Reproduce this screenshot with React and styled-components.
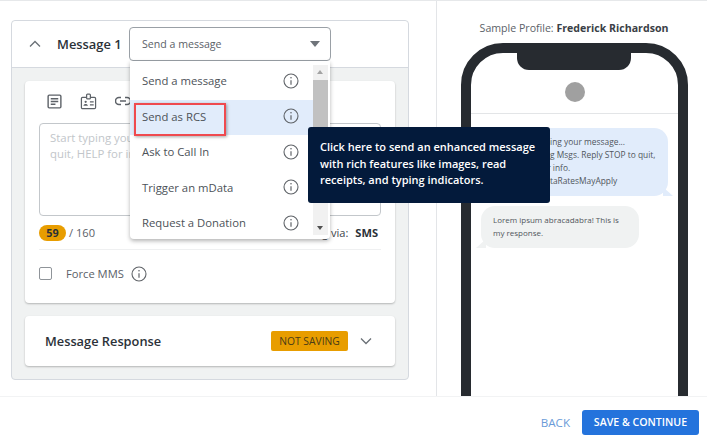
import React from 'react';
import styled, { createGlobalStyle } from 'styled-components';

const Global = createGlobalStyle`
  html, body { margin: 0; padding: 0; background: #fff; width: 707px; height: 439px; overflow: hidden; }
  body { font-family: "Open Sans", "Liberation Sans", sans-serif; color: #2b3138; }
  * { box-sizing: border-box; }
`;
const Page = styled.div`width:707px;height:439px;display:flex;flex-direction:column;border-top:1px solid #e6e8ea;overflow:hidden;`;
const Main = styled.div`display:flex;height:396px;border-bottom:1px solid #f2f3f4;`;
const LeftPane = styled.div`width:437px;flex:none;padding:19px 27px 0 11px;border-right:1px solid #e3e5e8;`;
const Card = styled.section`width:398px;height:360px;border:1px solid #d5d9df;border-radius:4px;background:#f0f2f2;display:flex;flex-direction:column;`;
const CardHeader = styled.header`height:47px;flex:none;background:#fff;border-bottom:1px solid #d5d9df;border-radius:4px 4px 0 0;display:flex;align-items:center;padding-left:16px;`;
const HeaderTitle = styled.h2`width:72px;flex:none;margin:0 0 0 15px;font-size:12.9px;line-height:20px;font-weight:600;color:#2b3138;white-space:nowrap;`;
const SelectWrap = styled.div`position:relative;width:202px;`;
const SelectBox = styled.div`height:34px;border:1px solid #9aa0a6;border-radius:4px;background:#fff;display:flex;align-items:center;justify-content:space-between;padding:0 10px 0 12px;font-size:10.6px;color:#5b6168;`;
const Caret = styled.span`width:0;height:0;border-left:5.5px solid transparent;border-right:5.5px solid transparent;border-top:6px solid #6f747a;`;
const Menu = styled.div`position:absolute;left:1px;top:34px;width:200px;height:178px;background:#fff;border-radius:0 0 4px 4px;box-shadow:0 2px 4px rgba(0,0,0,.3);padding-top:3px;z-index:3;`;
const MenuRow = styled.div`width:183px;height:35.5px;display:flex;align-items:center;justify-content:space-between;padding:0 14px 2px 12px;font-size:11.3px;color:#4c5258;background:${p => p.$active ? '#e1ecfb' : 'transparent'};white-space:nowrap;`;
const ScrollTrack = styled.div`position:absolute;left:183px;top:4px;width:15px;height:170px;background:#f1f1f1;`;
const ScrollThumb = styled.div`position:absolute;left:0;top:15px;width:15px;height:80px;background:#c1c1c1;`;
const ScrollArrow = styled.span`position:absolute;left:4px;${p => p.$up ? 'top:5px;border-bottom:4px solid #a3a3a3;' : 'bottom:5px;border-top:4px solid #505050;'}width:0;height:0;border-left:3.5px solid transparent;border-right:3.5px solid transparent;`;
const Highlight = styled.div`position:absolute;left:4px;top:42px;width:92px;height:33px;border:2px solid #ef4a4f;box-shadow:1px 1px 3px rgba(0,0,0,.35);`;
const Tooltip = styled.div`position:absolute;left:179px;top:100px;width:242px;height:76px;padding:12px 12px;background:#031a3b;border-radius:3px;color:#fff;font-size:11px;font-weight:600;line-height:16.7px;z-index:4;`;
const Body = styled.div`flex:1;padding:13px 13px 0;display:flex;flex-direction:column;gap:13px;`;
const EditorCard = styled.div`height:222px;background:#fff;border-radius:4px;box-shadow:0 1px 2px rgba(0,0,0,.25);padding:10px 14px 0;`;
const Toolbar = styled.div`height:20px;display:flex;align-items:center;gap:18px;padding-left:8px;color:#5d6268;margin-bottom:12px;`;
const Editor = styled.div`height:93px;border:1px solid #c3c7cb;border-radius:4px;padding:6px 10px;font-size:11.4px;line-height:16px;color:#c2c6ca;`;
const CountRow = styled.div`height:34px;display:flex;align-items:center;justify-content:space-between;border-bottom:1px solid #eff0f1;padding-right:3px;font-size:11.1px;color:#5b6168;`;
const CountLeft = styled.div`display:flex;align-items:center;gap:3px;`;
const Badge = styled.span`width:27px;height:16px;border-radius:8px;background:#e89d00;display:flex;align-items:center;justify-content:center;font-size:10.8px;font-weight:700;color:#2b3138;`;
const Via = styled.div`display:flex;gap:7px;color:#40464c;`;
const ViaValue = styled.strong`font-weight:700;color:#2b3138;`;
const ForceRow = styled.div`display:flex;align-items:center;height:47px;font-size:11.2px;color:#5b6168;`;
const Check = styled.span`width:13px;height:13px;margin-right:14px;border:1px solid #8f9499;border-radius:2px;`;
const ForceLabel = styled.span`margin-right:7px;`;
const ResponseCard = styled.div`height:50px;background:#fff;border-radius:4px;box-shadow:0 1px 2px rgba(0,0,0,.25);display:flex;align-items:center;padding:0 22px 0 20px;`;
const ResponseTitle = styled.div`flex:1;font-size:12.8px;font-weight:600;color:#2b3138;`;
const NotSaving = styled.span`width:77px;height:20px;margin-right:11px;background:#e89d00;border-radius:2px;display:flex;align-items:center;justify-content:center;font-size:10.3px;color:#4a3c17;`;
const RightPane = styled.div`flex:1;display:flex;flex-direction:column;align-items:center;padding-top:20px;overflow:hidden;`;
const Profile = styled.div`font-size:10.6px;line-height:15px;color:#5b6168;margin-bottom:7px;margin-left:4px;white-space:nowrap;`;
const ProfileName = styled.strong`font-weight:700;color:#3a4046;`;
const Phone = styled.div`position:relative;flex:none;width:227px;height:420px;margin-left:5px;border:10px solid #272b30;border-radius:42px;background:#fff;`;
const Notch = styled.div`position:absolute;left:46px;top:0;width:114px;height:17px;background:#272b30;border-radius:0 0 12px 12px;`;
const PhoneHead = styled.div`height:61px;border-bottom:1px solid #e3e5e7;display:flex;justify-content:center;padding-top:29px;`;
const Avatar = styled.div`width:20px;height:20px;border-radius:50%;background:#a0a0a0;`;
const Thread = styled.div`padding:14px 10px 0 10px;display:flex;flex-direction:column;gap:10px;line-height:13px;color:#50565c;`;
const Bubble = styled.div`position:relative;border-radius:14px;padding:7px 12px 9px;font-size:${p => p.$out ? '8.4px' : '8px'};width:${p => p.$out ? '163px' : '158px'};background:${p => p.$out ? '#e1ecfb' : '#f0f2f2'};align-self:${p => p.$out ? 'flex-end' : 'flex-start'};white-space:nowrap;
  &::after{content:"";position:absolute;bottom:0;${p => p.$out ? 'right:-5px;border-bottom:9px solid #e1ecfb;border-right:10px solid transparent;' : 'left:-5px;border-bottom:9px solid #f0f2f2;border-left:10px solid transparent;'}width:0;height:0;}`;
const Footer = styled.footer`flex:1;display:flex;align-items:center;justify-content:flex-end;padding:8px 8px 0 0;gap:12px;`;
const Back = styled.span`font-size:11.6px;color:#6a9bd8;`;
const Save = styled.button`width:117px;height:25px;border:0;border-radius:3px;background:#2473dc;color:#fff;font-family:inherit;font-size:10.6px;font-weight:600;padding:0;`;

const Info = ({ size = 16 }) => (
  <svg width={size} height={size} viewBox="0 0 16 16" fill="none" stroke="#606469" strokeWidth="1.1" style={{ flex: 'none' }}>
    <circle cx="8" cy="8" r="7" />
    <path d="M8 7.2V11.8" strokeWidth="1.2" />
    <circle cx="8" cy="4.8" r=".8" fill="#606469" stroke="none" />
  </svg>
);
const DocIcon = () => (
  <svg width="15" height="15" viewBox="0 0 16 16" fill="none" stroke="currentColor" strokeWidth="1.5">
    <rect x="1.2" y="1.2" width="13.6" height="13.6" rx="1.2" />
    <path d="M4 5h8M4 8h8M4 11h5" />
  </svg>
);
const BadgeIcon = () => (
  <svg width="17" height="17" viewBox="0 0 18 18" fill="none" stroke="currentColor" strokeWidth="1.3">
    <rect x="1.5" y="4.7" width="15" height="11.8" rx="1.2" />
    <rect x="7" y="1.2" width="4" height="5" rx="1" fill="#fff" />
    <circle cx="6" cy="9.3" r="1.2" fill="currentColor" stroke="none" />
    <path d="M3.6 13.4c.4-2.4 4.4-2.4 4.8 0z" fill="currentColor" stroke="none" />
    <path d="M10.5 9.5h4M10.5 12.5h4" />
  </svg>
);
const LinkIcon = () => (
  <svg width="16" height="16" viewBox="0 0 16 16" fill="none" stroke="currentColor" strokeWidth="1.5">
    <path d="M6 4.5H4a3.5 3.5 0 0 0 0 7h2M10 4.5h2a3.5 3.5 0 0 1 0 7h-2M5 8h6" />
  </svg>
);
const Chevron = ({ up, size = 14 }) => (
  <svg width={size} height={size} viewBox="0 0 14 14" fill="none" stroke="#6a7076" strokeWidth="1.3" style={{ flex: 'none' }}>
    <path d={up ? 'M2 9.5 7 4.5l5 5' : 'M2 4.5l5 5 5-5'} />
  </svg>
);

const options = ['Send a message', 'Send as RCS', 'Ask to Call In', 'Trigger an mData', 'Request a Donation'];

export default function App() {
  return (
    <Page>
      <Global />
      <Main>
        <LeftPane>
          <Card>
            <CardHeader>
              <Chevron up />
              <HeaderTitle>Message 1</HeaderTitle>
              <SelectWrap>
                <SelectBox>Send a message<Caret /></SelectBox>
                <Menu>
                  {options.map((o, i) => (
                    <MenuRow key={o} $active={i === 1}>{o}<Info /></MenuRow>
                  ))}
                  <ScrollTrack>
                    <ScrollArrow $up />
                    <ScrollThumb />
                    <ScrollArrow />
                  </ScrollTrack>
                  <Highlight />
                </Menu>
                <Tooltip>Click here to send an enhanced message with rich features like images, read receipts, and typing indicators.</Tooltip>
              </SelectWrap>
            </CardHeader>
            <Body>
              <EditorCard>
                <Toolbar><DocIcon /><BadgeIcon /><LinkIcon /></Toolbar>
                <Editor>Start typing your message... Recurring Msgs. Reply STOP to quit, HELP for info.</Editor>
                <CountRow>
                  <CountLeft><Badge>59</Badge>/ 160</CountLeft>
                  <Via>Sending via: <ViaValue>SMS</ViaValue></Via>
                </CountRow>
                <ForceRow>
                  <Check />
                  <ForceLabel>Force MMS</ForceLabel>
                  <Info />
                </ForceRow>
              </EditorCard>
              <ResponseCard>
                <ResponseTitle>Message Response</ResponseTitle>
                <NotSaving>NOT SAVING</NotSaving>
                <Chevron />
              </ResponseCard>
            </Body>
          </Card>
        </LeftPane>
        <RightPane>
          <Profile>Sample Profile: <ProfileName>Frederick Richardson</ProfileName></Profile>
          <Phone>
            <Notch />
            <PhoneHead><Avatar /></PhoneHead>
            <Thread>
              <Bubble $out>
                Start typing your message...<br />
                Recurring Msgs. Reply STOP to quit,<br />
                HELP for info.<br />
                Msg&amp;DataRatesMayApply
              </Bubble>
              <Bubble>Lorem ipsum abracadabra! This is<br />my response.</Bubble>
            </Thread>
          </Phone>
        </RightPane>
      </Main>
      <Footer>
        <Back>BACK</Back>
        <Save>SAVE &amp; CONTINUE</Save>
      </Footer>
    </Page>
  );
}
